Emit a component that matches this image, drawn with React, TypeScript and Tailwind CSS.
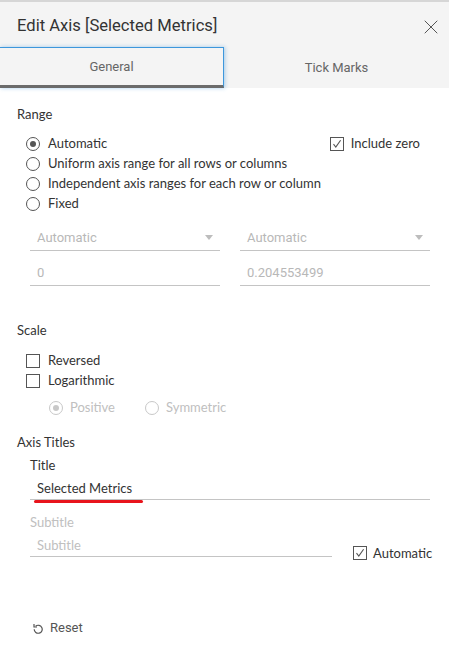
import { X } from "lucide-react";

function Radio({ checked, disabled }: { checked?: boolean; disabled?: boolean }) {
  const c = disabled ? "border-[#c8c8c8]" : "border-[#555]";
  return (
    <span className={`flex h-[14px] w-[14px] shrink-0 items-center justify-center rounded-full border ${c} bg-white`}>
      {checked && <span className={`h-[6px] w-[6px] rounded-full ${disabled ? "bg-[#c8c8c8]" : "bg-[#555]"}`} />}
    </span>
  );
}

function Check({ checked }: { checked?: boolean }) {
  return (
    <span className="flex h-[14px] w-[14px] shrink-0 items-center justify-center border border-[#555] bg-white">
      {checked && (
        <svg width="10" height="10" viewBox="0 0 10 10" fill="none">
          <path d="M1.5 5.2 L3.8 8 L8.6 1.2" stroke="#555" strokeWidth="1.1" />
        </svg>
      )}
    </span>
  );
}

function RadioRow({ label, checked }: { label: string; checked?: boolean }) {
  return (
    <div className="flex h-[20px] items-center gap-[8px]">
      <Radio checked={checked} />
      <span>{label}</span>
    </div>
  );
}

function Field({ text, arrow }: { text: string; arrow?: boolean }) {
  return (
    <div className="flex h-[25px] flex-1 items-center justify-between border-b border-[#c4c4c4] pl-[7px] pr-[7px] font-['Roboto',sans-serif] text-[13px] text-[#b8b8b8]">
      <span>{text}</span>
      {arrow && (
        <svg width="8" height="5" viewBox="0 0 8 5">
          <path d="M0 0 H8 L4 5 Z" fill="#bdbdbd" />
        </svg>
      )}
    </div>
  );
}

export default function App() {
  return (
    <div className="h-[652px] w-[449px] overflow-hidden border-t-2 border-[#d6d6d6] bg-white font-['Lato',sans-serif] text-[13px] text-[#333]">
      <div className="bg-[#f4f4f4]">
        <div className="flex h-[45px] items-center justify-between pl-[17px] pr-[6px] pt-[4px]">
          <span className="font-['Roboto',sans-serif] text-[16.6px] text-[#333]">Edit Axis [Selected Metrics]</span>
          <X size={24} strokeWidth={1} className="text-[#555]" />
        </div>
        <div className="flex h-[41px] font-['Roboto',sans-serif] text-[13px] text-[#666]">
          <div className="flex w-[224px] items-center justify-center border-t border-r border-[#3d97dc] border-b-[3px] border-b-[#6b6b6b] shadow-[1px_0_4px_rgba(61,151,220,0.45)]">
            General
          </div>
          <div className="flex flex-1 items-center justify-center">Tick Marks</div>
        </div>
      </div>

      <div className="px-[17px] pt-[17px]">
        <div className="text-[13px]">Range</div>
        <div className="mt-[9px] flex pl-[9px]">
          <div className="flex-1">
            <RadioRow label="Automatic" checked />
            <RadioRow label="Uniform axis range for all rows or columns" />
            <RadioRow label="Independent axis ranges for each row or column" />
            <RadioRow label="Fixed" />
          </div>
          <div className="flex h-[20px] items-center gap-[7px] pr-[12px]">
            <Check checked />
            <span>Include zero</span>
          </div>
        </div>

        <div className="mt-[12px] flex gap-[20px] pl-[13px] pr-[2px]">
          <Field text="Automatic" arrow />
          <Field text="Automatic" arrow />
        </div>
        <div className="mt-[10px] flex gap-[20px] pl-[13px] pr-[2px]">
          <Field text="0" />
          <Field text="0.204553499" />
        </div>

        <div className="mt-[35px]">Scale</div>
        <div className="mt-[11px] pl-[9px]">
          <div className="flex h-[20px] items-center gap-[8px]">
            <Check />
            <span>Reversed</span>
          </div>
          <div className="flex h-[20px] items-center gap-[8px]">
            <Check />
            <span>Logarithmic</span>
          </div>
          <div className="mt-[7px] flex h-[20px] items-center pl-[23px] text-[#c0c0c0]">
            <div className="flex items-center gap-[7px]">
              <Radio checked disabled />
              <span>Positive</span>
            </div>
            <div className="ml-[30px] flex items-center gap-[7px]">
              <Radio disabled />
              <span>Symmetric</span>
            </div>
          </div>
        </div>

        <div className="mt-[15px] flex h-[20px] items-center">Axis Titles</div>
        <div className="pl-[13px] pr-[2px]">
          <div className="mt-[3px] flex h-[20px] items-center">Title</div>
          <div className="mt-[3px] flex h-[21px] items-center border-b border-[#c4c4c4] pl-[7px]">
            <span className="relative inline-block">
              Selected Metrics
              <span className="absolute -bottom-[4px] -left-[3px] -right-[11px] h-[3px] rounded-full bg-[#e8141c]" />
            </span>
          </div>
          <div className="mt-[13px] flex h-[20px] items-center text-[#c0c0c0]">Subtitle</div>
          <div className="mt-[3px] flex items-end">
            <div className="flex h-[21px] w-[302px] shrink-0 items-center border-b border-[#c4c4c4] pl-[7px] text-[#c0c0c0]">Subtitle</div>
            <div className="mb-[-6px] ml-[21px] flex items-center gap-[6px]">
              <Check checked />
              <span>Automatic</span>
            </div>
          </div>
        </div>

        <div className="mt-[61px] flex h-[20px] items-center gap-[7px] pl-[16px] font-['Roboto',sans-serif] text-[13px] text-[#555]">
          <svg width="10" height="11" viewBox="0 0 10 11" fill="none">
            <path d="M2.6 3.2 A4 4 0 1 1 1.2 6.3" stroke="#555" strokeWidth="1.2" />
            <path d="M1 1 V4 H4" stroke="#555" strokeWidth="1.2" fill="none" />
          </svg>
          <span>Reset</span>
        </div>
      </div>
    </div>
  );
}
